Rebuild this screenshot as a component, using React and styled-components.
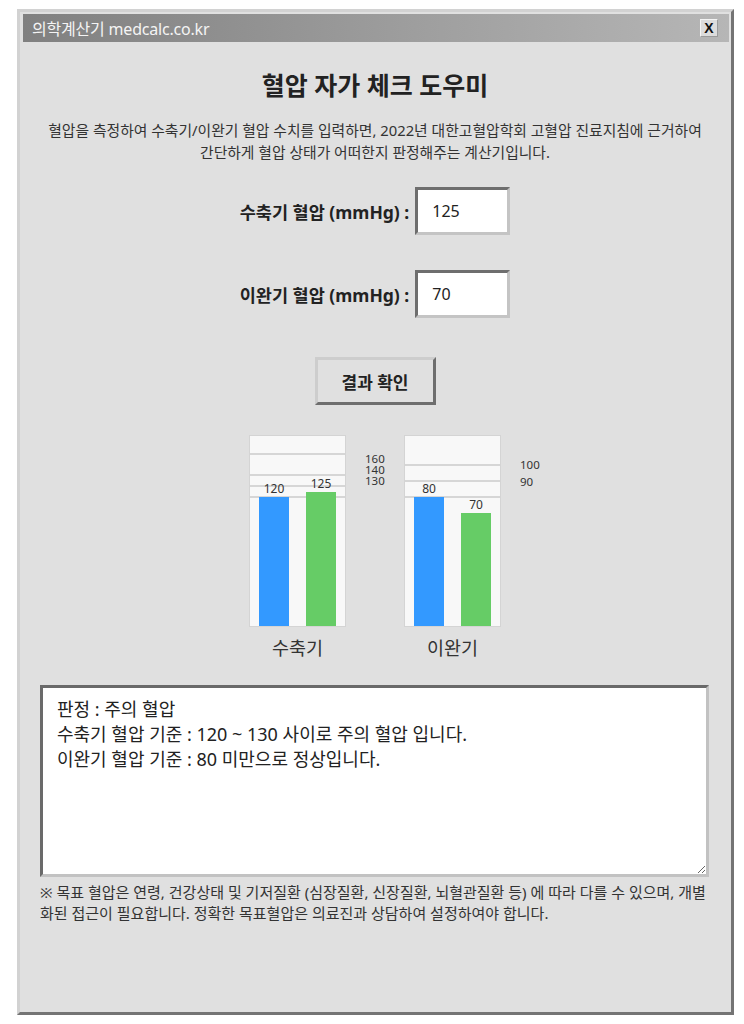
import React from 'react';
import styled, { createGlobalStyle } from 'styled-components';

const GlobalStyle = createGlobalStyle`
  body {
    margin: 0;
    background: #ffffff;
    font-family: "Noto Sans", "Noto Sans CJK KR", sans-serif;
    color: #222;
  }
`;

const charts = [
  {
    name: '수축기',
    max: 176.7,
    bars: [120, 125],
    lines: [120, 130, 140, 160],
    labels: [
      { text: '160', top: 17 },
      { text: '140', top: 28 },
      { text: '130', top: 39 },
    ],
  },
  {
    name: '이완기',
    max: 117.8,
    bars: [80, 70],
    lines: [80, 90, 100],
    labels: [
      { text: '100', top: 23 },
      { text: '90', top: 40 },
    ],
  },
];

const CHART_H = 190;

const result = `판정 : 주의 혈압
수축기 혈압 기준 : 120 ~ 130 사이로 주의 혈압 입니다.
이완기 혈압 기준 : 80 미만으로 정상입니다.`;

function BarChart({ chart }) {
  const toPx = (v) => (v / chart.max) * CHART_H;
  return (
    <ChartGroup>
      <ChartBox>
        {chart.lines.map((v) => (
          <GridLine key={v} style={{ bottom: toPx(v) }} />
        ))}
        <Bars>
          {chart.bars.map((v, i) => (
            <BarSlot key={i}>
              <BarValue>{v}</BarValue>
              <Bar $color={i === 0 ? '#3399ff' : '#66cc66'} style={{ height: toPx(v) }} />
            </BarSlot>
          ))}
        </Bars>
        {chart.labels.map((l) => (
          <AxisLabel key={l.text} style={{ top: l.top }}>
            {l.text}
          </AxisLabel>
        ))}
      </ChartBox>
      <Caption>{chart.name}</Caption>
    </ChartGroup>
  );
}

export default function App() {
  return (
    <>
      <GlobalStyle />
      <Window>
        <TitleBar>
          <TitleText>의학계산기 medcalc.co.kr</TitleText>
          <CloseButton>X</CloseButton>
        </TitleBar>
        <Body>
          <Heading>혈압 자가 체크 도우미</Heading>
          <Description>
            혈압을 측정하여 수축기/이완기 혈압 수치를 입력하면, 2022년 대한고혈압학회 고혈압 진료지침에 근거하여
            <br />
            간단하게 혈압 상태가 어떠한지 판정해주는 계산기입니다.
          </Description>

          <FieldRow>
            <FieldLabel>수축기 혈압 (mmHg) :</FieldLabel>
            <ValueInput defaultValue="125" />
          </FieldRow>
          <FieldRow $gap={35}>
            <FieldLabel>이완기 혈압 (mmHg) :</FieldLabel>
            <ValueInput defaultValue="70" />
          </FieldRow>

          <SubmitButton>결과 확인</SubmitButton>

          <ChartRow>
            {charts.map((c) => (
              <BarChart key={c.name} chart={c} />
            ))}
          </ChartRow>

          <ResultArea readOnly defaultValue={result} />
          <Note>
            ※ 목표 혈압은 연령, 건강상태 및 기저질환 (심장질환, 신장질환, 뇌혈관질환 등) 에 따라 다를 수 있으며, 개별화된
            접근이 필요합니다. 정확한 목표혈압은 의료진과 상담하여 설정하여야 합니다.
          </Note>
        </Body>
      </Window>
    </>
  );
}

const Window = styled.div`
  box-sizing: border-box;
  width: 717px;
  height: 1006px;
  margin: 9px 0 0 17px;
  padding: 2px 1px 0 3px;
  background: #e0e0e0;
  border-top: 3px solid #d2d2d2;
  border-left: 3px solid #d2d2d2;
  border-right: 3px solid #747474;
  border-bottom: 3px solid #747474;
`;

const TitleBar = styled.div`
  height: 28px;
  margin-right: 1px;
  display: flex;
  align-items: center;
  justify-content: space-between;
  padding: 0 11px 0 9px;
  background: linear-gradient(to right, #808080, #b6b6b6);
`;

const TitleText = styled.span`
  color: #f4f4f4;
  font-size: 16px;
  letter-spacing: -0.2px;
`;

const CloseButton = styled.span`
  box-sizing: border-box;
  width: 18px;
  height: 18px;
  display: flex;
  align-items: center;
  justify-content: center;
  background: #dcdcdc;
  border-top: 1px solid #f4f4f4;
  border-left: 1px solid #f4f4f4;
  border-right: 1px solid #9a9a9a;
  border-bottom: 1px solid #9a9a9a;
  font-family: "Liberation Sans", sans-serif;
  font-size: 14px;
  font-weight: 700;
  color: #111;
`;

const Body = styled.div`
  padding: 0 20px 0 17px;
  display: flex;
  flex-direction: column;
  align-items: center;
`;

const Heading = styled.h1`
  margin: 28px 0 0;
  font-size: 25px;
  line-height: 30px;
  font-weight: 700;
  color: #222;
`;

const Description = styled.p`
  margin: 19px 0 0;
  font-size: 14.8px;
  line-height: 22px;
  text-align: center;
  color: #333;
  white-space: nowrap;
`;

const FieldRow = styled.div`
  margin-top: ${({ $gap }) => ($gap ? `${$gap}px` : '24px')};
  display: flex;
  align-items: center;
  gap: 6px;
`;

const FieldLabel = styled.label`
  font-size: 17.5px;
  font-weight: 700;
  color: #222;
`;

const ValueInput = styled.input`
  box-sizing: border-box;
  width: 95px;
  height: 48px;
  padding: 0 0 0 14px;
  background: #fff;
  border-top: 3px solid #6e6e6e;
  border-left: 3px solid #6e6e6e;
  border-right: 3px solid #c4c4c4;
  border-bottom: 3px solid #c4c4c4;
  font-family: inherit;
  font-size: 16px;
  color: #222;
  outline: none;
`;

const SubmitButton = styled.button`
  box-sizing: border-box;
  margin-top: 39px;
  width: 121px;
  height: 48px;
  background: #e0e0e0;
  border-top: 3px solid #cdcdcd;
  border-left: 3px solid #cdcdcd;
  border-right: 3px solid #6e6e6e;
  border-bottom: 3px solid #6e6e6e;
  font-family: inherit;
  font-size: 17px;
  font-weight: 700;
  color: #222;
`;

const ChartRow = styled.div`
  margin-top: 30px;
  display: flex;
  gap: 58px;
`;

const ChartGroup = styled.div`
  display: flex;
  flex-direction: column;
  align-items: center;
`;

const ChartBox = styled.div`
  position: relative;
  box-sizing: border-box;
  width: 97px;
  height: 192px;
  background: #f8f8f8;
  border: 1px solid #d4d4d4;
`;

const GridLine = styled.div`
  position: absolute;
  left: 0;
  right: 0;
  height: 2px;
  margin-bottom: -1px;
  background: #d6d6d6;
`;

const Bars = styled.div`
  position: relative;
  height: 100%;
  display: flex;
  align-items: flex-end;
  gap: 17px;
  padding-left: 9px;
`;

const BarSlot = styled.div`
  display: flex;
  flex-direction: column;
  align-items: center;
`;

const BarValue = styled.span`
  font-size: 12px;
  line-height: 14px;
  color: #333;
  margin-bottom: 1px;
`;

const Bar = styled.div`
  width: 30px;
  background: ${({ $color }) => $color};
`;

const AxisLabel = styled.span`
  position: absolute;
  left: calc(100% + 20px);
  font-size: 11.5px;
  line-height: 11px;
  color: #333;
`;

const Caption = styled.div`
  margin-top: 10px;
  font-size: 18.5px;
  line-height: 22px;
  color: #333;
`;

const ResultArea = styled.textarea`
  box-sizing: border-box;
  align-self: flex-start;
  margin: 26px 0 0;
  width: 669px;
  height: 192px;
  padding: 9px 14px;
  background: #fff;
  border-top: 3px solid #6a6a6a;
  border-left: 3px solid #6a6a6a;
  border-right: 3px solid #c2c2c2;
  border-bottom: 3px solid #c2c2c2;
  font-family: inherit;
  font-size: 18px;
  line-height: 25px;
  color: #222;
  outline: none;
  resize: both;
`;

const Note = styled.p`
  align-self: flex-start;
  margin: 5px 0 0;
  width: 671px;
  font-size: 15px;
  line-height: 21px;
  color: #333;
`;
